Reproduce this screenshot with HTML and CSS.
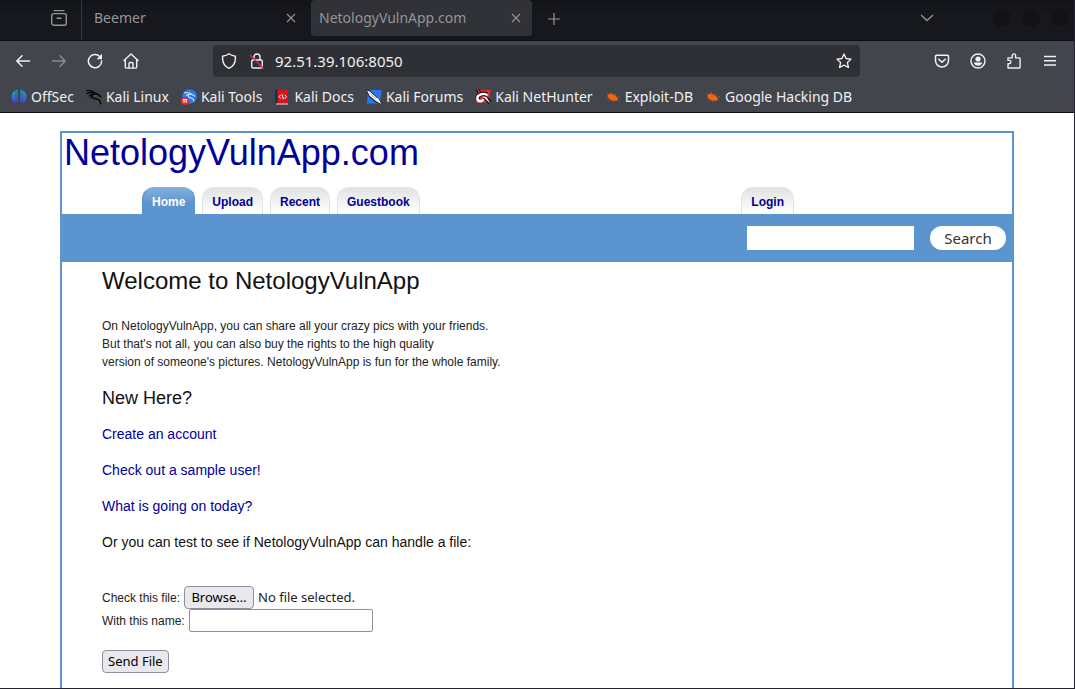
FILE: index.html
```html
<!DOCTYPE html>
<html lang="en">
<head>
<meta charset="utf-8">
<title>NetologyVulnApp.com</title>
<link rel="stylesheet" href="styles.css">
</head>
<body>
<div class="window">
  <header class="chrome">
    <div class="tabstrip">
      <button class="icon-btn view-btn" aria-label="Firefox View">
        <svg width="18" height="18" viewBox="0 0 18 18" fill="none" stroke="currentColor" stroke-width="1.4" stroke-linecap="round"><path d="M4 1.6h10"/><rect x="1.7" y="4.6" width="14.6" height="11.6" rx="2"/><path d="M7 9.2h4"/></svg>
      </button>
      <div class="tab">
        <span class="tab-title">Beemer</span>
        <button class="icon-btn" aria-label="Close Beemer"><svg width="10" height="10" viewBox="0 0 10 10" stroke="currentColor" stroke-width="1.1"><path d="M1 1l8 8M9 1L1 9"/></svg></button>
      </div>
      <div class="tab tab-active">
        <span class="tab-title">NetologyVulnApp.com</span>
        <button class="icon-btn" aria-label="Close NetologyVulnApp.com"><svg width="10" height="10" viewBox="0 0 10 10" stroke="currentColor" stroke-width="1.1"><path d="M1 1l8 8M9 1L1 9"/></svg></button>
      </div>
      <button class="icon-btn new-tab" aria-label="New tab"><svg width="12" height="12" viewBox="0 0 12 12" stroke="currentColor" stroke-width="1.2"><path d="M6 0v12M0 6h12"/></svg></button>
      <button class="icon-btn all-tabs" aria-label="List all tabs"><svg width="14" height="8" viewBox="0 0 14 8" fill="none" stroke="currentColor" stroke-width="1.3"><path d="M1 1l6 5.6L13 1"/></svg></button>
      <div class="window-controls">
        <button aria-label="Minimize"></button>
        <button aria-label="Maximize"></button>
        <button aria-label="Close"></button>
      </div>
    </div>

    <div class="toolbar">
      <div class="nav-buttons">
        <button class="icon-btn" aria-label="Back"><svg width="16" height="16" viewBox="0 0 16 16" fill="none" stroke="currentColor" stroke-width="1.5" stroke-linecap="round" stroke-linejoin="round"><path d="M14.5 8H1.8M7 2.8L1.8 8 7 13.2"/></svg></button>
        <button class="icon-btn dim" aria-label="Forward"><svg width="16" height="16" viewBox="0 0 16 16" fill="none" stroke="currentColor" stroke-width="1.5" stroke-linecap="round" stroke-linejoin="round"><path d="M1.5 8h12.7M9 2.8L14.2 8 9 13.2"/></svg></button>
        <button class="icon-btn" aria-label="Reload"><svg width="16" height="16" viewBox="0 0 16 16" fill="none" stroke="currentColor" stroke-width="1.5" stroke-linecap="round"><path d="M12.8 3.6A6.6 6.6 0 1 0 14.6 8"/><path d="M15 .8v5.400H9.600z" fill="currentColor" stroke="none"/></svg></button>
        <button class="icon-btn" aria-label="Home"><svg width="16" height="16" viewBox="0 0 16 16" fill="none" stroke="currentColor" stroke-width="1.4" stroke-linecap="round" stroke-linejoin="round"><path d="M1 7.600L8 1l7 6.600M2.300 6.600v7.500a1 1 0 0 0 1 1h9.400a1 1 0 0 0 1-1V6.600M6 15v-4.500a1 1 0 0 1 1-1h2a1 1 0 0 1 1 1V15"/></svg></button>
      </div>
      <div class="urlbar">
        <svg width="16" height="16" viewBox="0 0 16 16" fill="none" stroke="currentColor" stroke-width="1.4" stroke-linejoin="round"><path d="M8 .8C6.200 2.300 3.800 2.900 1.600 3.200 1.200 8.600 3.200 13.200 8 15.300c4.800-2.100 6.800-6.700 6.400-12.100C12.200 2.900 9.800 2.300 8 .8z"/></svg>
        <svg width="16" height="16" viewBox="0 0 16 16" fill="none" stroke="currentColor" stroke-width="1.4"><rect x="2.700" y="7" width="10.600" height="8" rx="1.500"/><path d="M5 7V4a3 3 0 0 1 6 0v3"/><path d="M1 2l13.500 13.500" stroke="#e22850" stroke-width="1.500"/></svg>
        <input class="url" type="text" value="92.51.39.106:8050" aria-label="Address">
        <button class="icon-btn" aria-label="Bookmark this page"><svg width="16" height="16" viewBox="0 0 16 16" fill="none" stroke="currentColor" stroke-width="1.300" stroke-linejoin="round"><path d="M8 .9l2.100 4.600 5 .6-3.700 3.400 1 5L8 12.100l-4.400 2.400 1-5L.9 6.100l5-.6z"/></svg></button>
      </div>
      <div class="tool-buttons">
        <button class="icon-btn" aria-label="Save to Pocket"><svg width="16" height="16" viewBox="0 0 16 16" fill="none" stroke="currentColor" stroke-width="1.500" stroke-linecap="round" stroke-linejoin="round"><path d="M2.500 2.200h11a1 1 0 0 1 1 1V7.500a6.500 6.500 0 0 1-13 0V3.200a1 1 0 0 1 1-1z"/><path d="M4.800 6.200L8 9.200l3.200-3"/></svg></button>
        <button class="icon-btn" aria-label="Account"><svg width="16" height="16" viewBox="0 0 16 16" fill="none" stroke="currentColor" stroke-width="1.400"><circle cx="8" cy="8" r="7"/><circle cx="8" cy="6" r="2.600" fill="currentColor" stroke="none"/><path d="M4 9.500h8v1A4.600 4.600 0 0 1 8 12.800a4.600 4.600 0 0 1-4-2.300z" fill="currentColor" stroke="none"/></svg></button>
        <button class="icon-btn" aria-label="Extensions"><svg width="16" height="16" viewBox="0 0 16 16" fill="none" stroke="currentColor" stroke-width="1.400" stroke-linejoin="round"><path d="M2 15v-4.200h1.200a1.700 1.700 0 0 0 0-3.400H2V4.900h4.200V2.600a1.700 1.700 0 0 1 3.400 0v2.300h3.700a.8.8 0 0 1 .8.800V14.200a.8.8 0 0 1-.8.800z"/></svg></button>
        <button class="icon-btn" aria-label="Menu"><svg width="16" height="16" viewBox="0 0 16 16" stroke="currentColor" stroke-width="1.400"><path d="M2 3.500h12M2 7.700h12M2 12h12"/></svg></button>
      </div>
    </div>

    <nav class="bookmarks" aria-label="Bookmarks">
      <a href="#"><svg width="16" height="16" viewBox="0 0 16 16"><defs><linearGradient id="off" x1="0" y1="0" x2="0" y2="1"><stop offset="0" stop-color="#16aeb9"/><stop offset=".5" stop-color="#2878d2"/><stop offset="1" stop-color="#6628e0"/></linearGradient></defs><path fill="url(#off)" d="M4.700 1.300v13.200A7.200 7.200 0 0 1 .5 8a7.200 7.200 0 0 1 4.200-6.700zM5.300 1l1.400-.4v12L5.300 14.500zM9.300.6l1.400.4v13.500l-1.400-1.900zM11.300 1.300A7.200 7.200 0 0 1 15.500 8a7.200 7.200 0 0 1-4.200 6.500z"/></svg>OffSec</a>
      <a href="#"><svg width="16" height="16" viewBox="0 0 16 16" fill="none" stroke="#08080a" stroke-linecap="round"><path stroke-width="1.300" d="M.5 1.500c3-.2 6 .3 8.500 2M.8 4.500c2-1.200 5-1.200 7.500.2"/><path stroke-width="1.600" d="M4.500 6.500c2-1.500 5.500-2.600 8.300-.5 1 .8 1.500 1.500 2 1.600M6.500 5.500C4.500 8.700 7 9.200 10 9.800c3 .7 4.500 2.200 4.800 5"/><path stroke-width=".8" d="M2 7.200l3-.9M4 9l2-1.600"/></svg>Kali Linux</a>
      <a href="#"><svg width="16" height="16" viewBox="0 0 16 16"><circle cx="8.500" cy="7.500" r="7.300" fill="#2878f0"/><path fill="none" stroke="#d5e8ff" stroke-width="1.100" d="M3 4c3-1 6 0 8 1.500M5 6.500c3-2 7-1.500 9 1M8 5c-1.500 3 0 3.500 2 4s3 1.500 3 3.500"/><circle cx="4" cy="12" r="4" fill="#e22b30"/><path stroke="#fff" stroke-width="1.100" d="M1.800 10.500H6.200M3 10.500v3.200M5.200 10.500v3.200"/></svg>Kali Tools</a>
      <a href="#"><svg width="16" height="16" viewBox="0 0 16 16"><path fill="#13234d" d="M1.500 .5h2v14h-2z"/><path fill="#db1218" d="M3.500 .5H14v14H3.500z"/><path fill="#e7dfe0" d="M2 14.500h12v1H2z"/><path fill="none" stroke="#fff" stroke-width="1" d="M6.800 5.800L5 7.700l1.800 1.900M10.700 5.800l1.800 1.900-1.800 1.900M8 5.300l1.500 4.800"/></svg>Kali Docs</a>
      <a href="#"><svg width="16" height="16" viewBox="0 0 16 16"><path fill="#2679ee" d="M2.500 1h13.300l-2 13.500H.8z"/><path fill="#18191e" d="M0 .5l4.500 1.200L11 8l2.500 2 2.500 5.700-6.500-2.400L3 8z"/><path fill="#fff" d="M1 1.500l3.200 1.300L10.500 8.600l2.200 1.200 2.500 5.200-5-2.700L3.700 7z"/><path fill="none" stroke="#506080" stroke-width=".6" d="M3.500 4l6.500 6"/></svg>Kali Forums</a>
      <a href="#"><svg width="16" height="16" viewBox="0 0 16 16"><path fill="#e62d35" d="M2.500 1h13.300L13.800 13.500H1z"/><path fill="none" stroke="#17181d" stroke-width="4.200" d="M3 10.500C1.500 6 8 3.500 12 5.500M9 8.500l3 1.500 3 4"/><path fill="none" stroke="#fff" stroke-width="2.300" d="M12.500 6.300C9 3.500 2 5.500 2.300 9.500c.4 3.500 5 3.600 6 .7"/><path fill="#fff" d="M7.500 7.500l4 .5 4 6.500-4.500-4z"/><path stroke="#111" stroke-width="1.200" d="M3 4.500L1.500 1M6 3.500L4 .5"/></svg>Kali NetHunter</a>
      <a href="#"><svg width="16" height="16" viewBox="0 0 16 16"><path fill="#f0650f" d="M2.500 6c2-2 5-1.500 7.500.5 2 1.400 3 3 2.700 4.500-2 1.300-4.800 1-7 0C3.500 9.700 2.200 8 2.500 6z"/><path fill="none" stroke="#bd5928" stroke-width=".7" d="M1.500 4l2.500 2M6 3l1 2.500M10 4l.5 3M1 9h3M3.500 12l2.500-2M8 13v-2M12.500 10l2 2M12 8.500l3-.8"/></svg>Exploit-DB</a>
      <a href="#"><svg width="16" height="16" viewBox="0 0 16 16"><path fill="#f0650f" d="M2.500 6c2-2 5-1.500 7.500.5 2 1.400 3 3 2.700 4.500-2 1.300-4.800 1-7 0C3.500 9.700 2.200 8 2.500 6z"/><path fill="none" stroke="#bd5928" stroke-width=".7" d="M1.500 4l2.500 2M6 3l1 2.500M10 4l.5 3M1 9h3M3.500 12l2.500-2M8 13v-2M12.500 10l2 2M12 8.500l3-.8"/></svg>Google Hacking DB</a>
    </nav>
  </header>

  <main class="viewport">
    <div class="container">
      <h1 class="site-title"><a href="#">NetologyVulnApp.com</a></h1>
      <nav class="site-tabs" aria-label="Site">
        <a class="site-tab current" href="#">Home</a>
        <a class="site-tab" href="#">Upload</a>
        <a class="site-tab" href="#">Recent</a>
        <a class="site-tab" href="#">Guestbook</a>
        <a class="site-tab login" href="#">Login</a>
      </nav>
      <form class="search-bar" role="search">
        <input class="search-input" type="text" aria-label="Search pictures">
        <button class="search-btn" type="submit">Search</button>
      </form>
      <div class="content">
        <h2>Welcome to NetologyVulnApp</h2>
        <p>On NetologyVulnApp, you can share all your crazy pics with your friends.<br>But that's not all, you can also buy the rights to the high quality<br>version of someone's pictures. NetologyVulnApp is fun for the whole family.</p>
        <h3>New Here?</h3>
        <h4><a href="#">Create an account</a></h4>
        <h4><a href="#">Check out a sample user!</a></h4>
        <h4><a href="#">What is going on today?</a></h4>
        <h4>Or you can test to see if NetologyVulnApp can handle a file:</h4>
        <form class="file-form">
          <div class="field">
            <label for="browse">Check this file:</label>
            <button class="form-btn browse" id="browse" type="button">Browse…</button>
            <span class="file-status" id="file-status">No file selected.</span>
            <input id="file" type="file" hidden>
          </div>
          <div class="field">
            <label for="name">With this name:</label>
            <input class="name-input" id="name" type="text">
          </div>
          <button class="form-btn send" type="submit">Send File</button>
        </form>
      </div>
    </div>
  </main>
</div>
<script src="script.js"></script>
</body>
</html>
```

FILE: styles.css
```css
* { box-sizing: border-box; }

body {
  margin: 0;
  font: 12px/18px "Liberation Sans", Arial, sans-serif;
  color: #222;
}

button, input { font: inherit; color: inherit; }
a { text-decoration: none; }
svg { flex: none; display: block; }

.window {
  display: flex;
  flex-direction: column;
  height: 100vh;
  border: solid #23222e;
  border-width: 0 1px 1px 0;
}

/* Browser chrome */
.chrome {
  flex: none;
  font-family: "Noto Sans", sans-serif;
  color: #f0f0f2;
  background: #43454c;
  border-bottom: 1px solid #0c0c10;
}

.icon-btn {
  display: flex;
  flex: none;
  padding: 0;
  border: 0;
  background: none;
}

.tabstrip {
  display: flex;
  align-items: flex-start;
  height: 41px;
  color: #949598;
  background: linear-gradient(#121318, #17181d 14px);
  border-bottom: 1px solid #0b0c10;
}

.view-btn {
  width: 82px;
  height: 40px;
  padding: 9px 0 0 50px;
  border-right: 1px solid #35363b;
}

.tab {
  display: flex;
  align-items: center;
  justify-content: space-between;
  width: 229px;
  height: 36px;
  padding: 0 15px 0 12px;
  font-size: 14px;
}

.tab-active {
  width: 221px;
  padding: 0 11px 0 8px;
  background: #313237;
  border-radius: 4px;
}

.new-tab { margin: 13px 0 0 16px; }
.all-tabs { margin: 14px 59px 0 auto; }

.window-controls {
  display: flex;
  gap: 11px;
  margin: 9px 5px 0 0;
}

.window-controls button {
  width: 18px;
  height: 18px;
  padding: 0;
  border: 0;
  border-radius: 50%;
  background: #131317;
}

.toolbar {
  display: flex;
  align-items: center;
  height: 40px;
  padding: 0 16px 0 15px;
}

.nav-buttons, .tool-buttons {
  display: flex;
  gap: 20px;
}

.dim { color: #8b8c91; }

.urlbar {
  display: flex;
  flex: 1;
  align-items: center;
  gap: 12px;
  height: 32px;
  margin: 0 74px;
  padding: 0 8px;
  background: #2f3035;
  border-radius: 4px;
}

.url {
  flex: 1;
  min-width: 0;
  margin-left: -2px;
  padding: 0;
  border: 0;
  font-size: 15px;
  background: none;
}

.bookmarks {
  display: flex;
  gap: 12px;
  height: 31px;
  padding: 0 11px;
  overflow: hidden;
  white-space: nowrap;
}

.bookmarks a {
  display: flex;
  align-items: center;
  gap: 4px;
  font-size: 14px;
  color: inherit;
}

/* Page */
.viewport {
  flex: 1;
  min-height: 0;
  padding: 18px 60px 0;
  overflow-y: auto;
  scrollbar-width: none;
  background: #fff;
}

.container {
  max-width: 954px;
  min-height: 640px;
  margin: 0 auto;
  border: 2px solid #5c94cf;
}

.site-title {
  margin: 0 0 14px;
  padding-left: 2px;
  font-size: 36px;
  line-height: 40px;
  font-weight: 400;
}

.site-title a, .content a { color: #009; }

.site-tabs {
  display: flex;
  gap: 7px;
  padding: 0 218px 0 80px;
}

.site-tab {
  height: 27px;
  padding: 5px 9px 3px;
  border: 1px solid #e3e4e4;
  border-bottom: 0;
  border-radius: 12px 12px 0 0;
  font-weight: 700;
  color: #009;
  background: linear-gradient(#e1e3e3, #fff);
}

.current {
  color: #fff;
  border-color: #5c94cf;
  border-top-color: #83afda;
  background: linear-gradient(#83afda, #5c94cf 16px);
}

.login { margin-left: auto; }

.search-bar {
  display: flex;
  align-items: center;
  justify-content: flex-end;
  gap: 16px;
  height: 48px;
  padding-right: 6px;
  background: #5c94cf;
}

.search-input {
  width: 167px;
  height: 24px;
  padding: 0 4px;
  border: 0;
  background: #fff;
}

.search-btn {
  width: 76px;
  height: 24px;
  padding: 0;
  border: 0;
  border-radius: 12px;
  font: 15px/22px "Noto Sans", sans-serif;
  color: #333;
  background: #fff;
}

.content { padding: 0 40px; }

.content h2, .content h3, .content h4 {
  margin: 0 0 18px;
  font-weight: 400;
  color: #111;
}

.content h2 {
  margin-bottom: 17px;
  font-size: 24px;
  line-height: 38px;
}

.content p { margin: 0 0 18px; }
.content h3 { font-size: 18px; }
.content h4 { font-size: 14px; }

.file-form { padding-top: 17px; }

.field {
  display: flex;
  align-items: center;
  gap: 4px;
  height: 23px;
}

.form-btn {
  height: 23px;
  padding: 0 5px;
  border: 1px solid #8f8f9d;
  border-radius: 4px;
  font: 13px/21px "Noto Sans", sans-serif;
  color: #000;
  background: #e9e9ed;
}

.browse { width: 70px; }

.file-status { font: 13px/21px "Noto Sans", sans-serif; }

.name-input {
  width: 184px;
  height: 23px;
  padding: 0 4px;
  border: 1px solid #8f8f9d;
  border-radius: 2px;
}

.send { margin-top: 18px; }
```

FILE: script.js
```js
const picker = document.getElementById("file");

document.getElementById("browse").addEventListener("click", () => picker.click());

picker.addEventListener("change", () => {
  document.getElementById("file-status").textContent =
    picker.files.length ? picker.files[0].name : "No file selected.";
});
```
